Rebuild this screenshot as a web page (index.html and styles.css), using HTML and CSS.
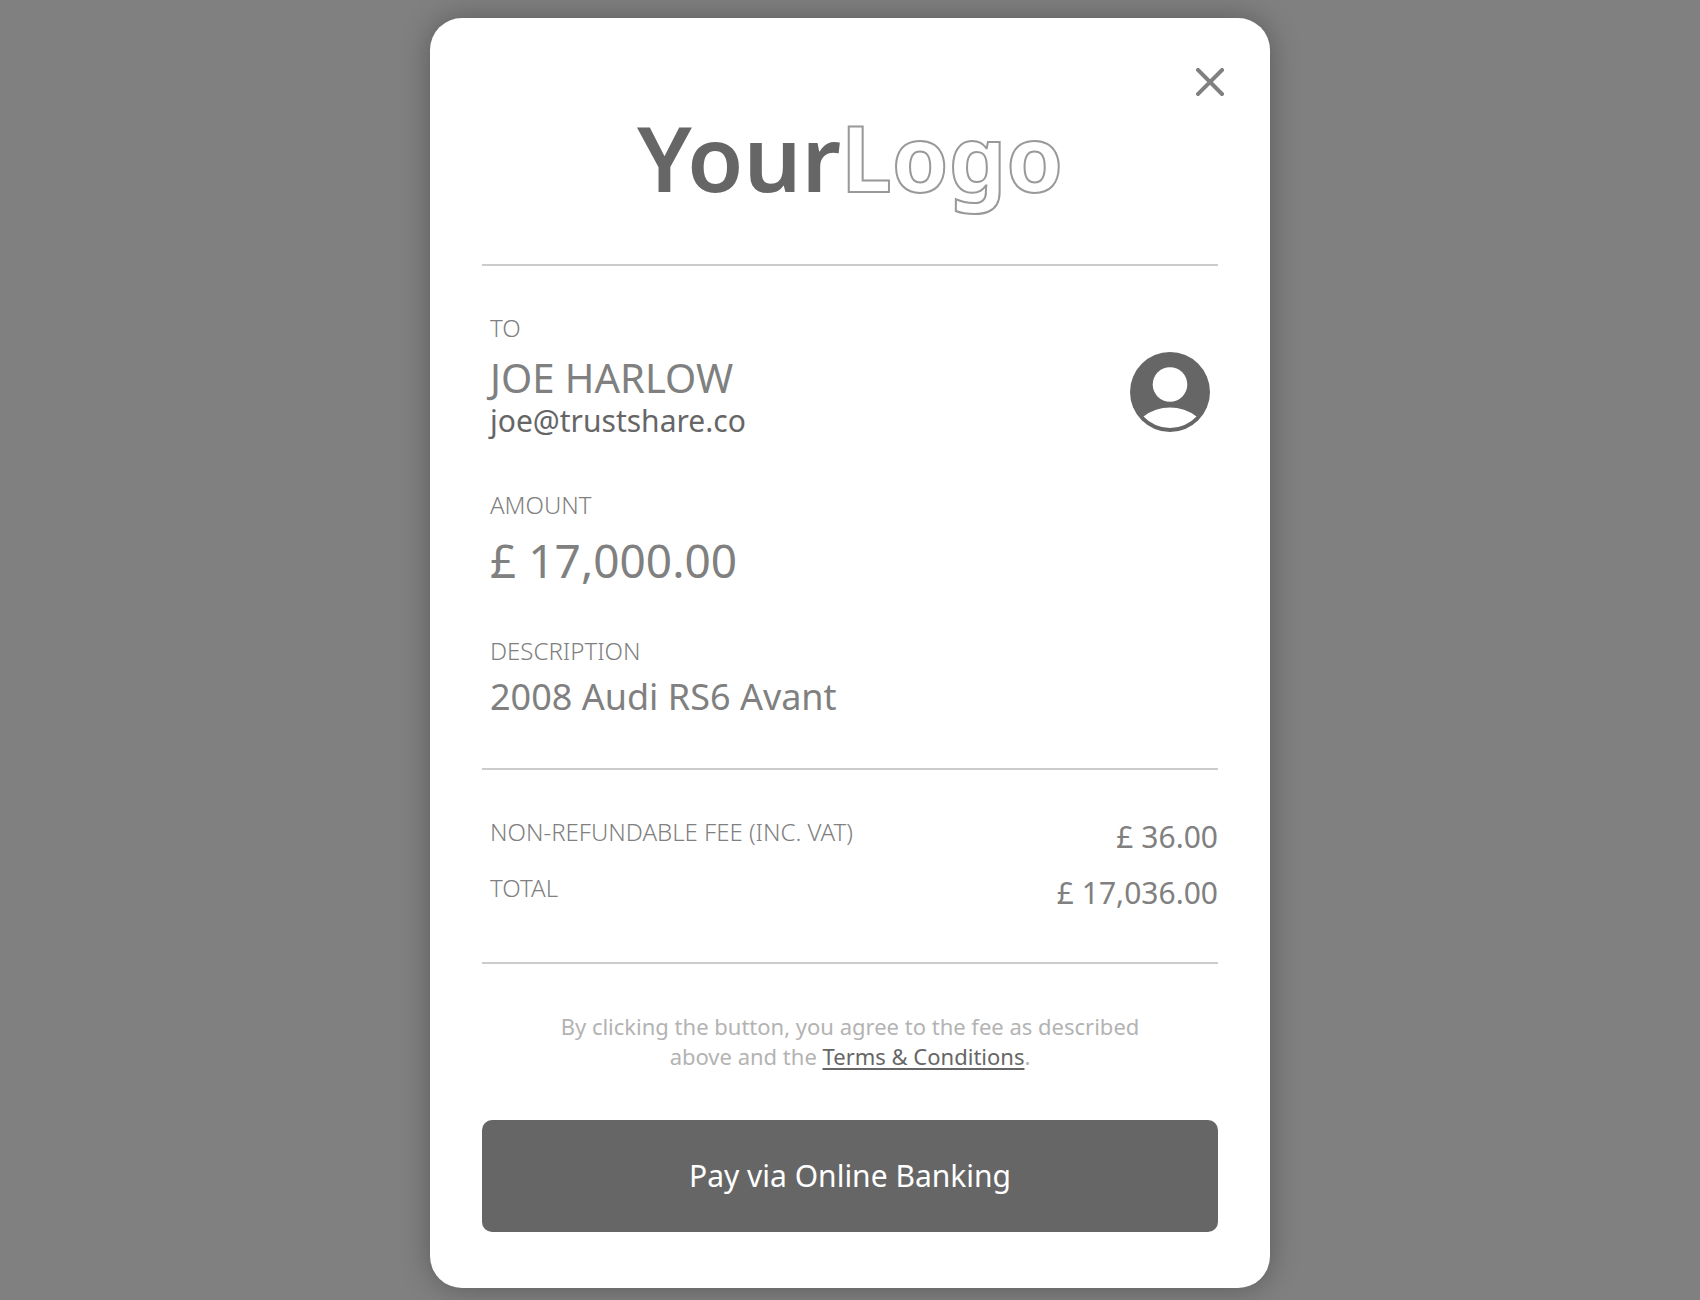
FILE: index.html
```
<!DOCTYPE html>
<html lang="en">
<head>
<meta charset="utf-8">
<meta name="viewport" content="width=device-width, initial-scale=1">
<title>Confirm payment</title>
<link rel="stylesheet" href="styles.css">
</head>
<body>
<main class="dialog" role="dialog" aria-label="Confirm payment">
  <button class="close" type="button" aria-label="Close">
    <svg viewBox="0 0 28 28" width="28" height="28" aria-hidden="true"><path d="M2 2 26 26M26 2 2 26"/></svg>
  </button>

  <header class="brand">
    <span class="brand-solid">Your</span><span class="brand-outline">Logo</span>
  </header>

  <section class="details">
    <div class="recipient">
      <div class="field">
        <h2 class="label">TO</h2>
        <p class="name">JOE HARLOW</p>
        <p class="email">joe@trustshare.co</p>
      </div>
      <svg class="avatar" viewBox="0 0 80 80" width="80" height="80" aria-hidden="true">
        <circle class="avatar-disc" cx="40" cy="40" r="40"/>
        <circle class="avatar-figure" cx="40" cy="32.500" r="17.300"/>
        <path class="avatar-figure" d="M13.500 64.400A43.500 43.500 0 0 1 66.500 64.400A36 36 0 0 1 13.500 64.400Z"/>
      </svg>
    </div>
    <div class="field">
      <h2 class="label">AMOUNT</h2>
      <p class="amount">£ 17,000.00</p>
    </div>
    <div class="field">
      <h2 class="label">DESCRIPTION</h2>
      <p class="description">2008 Audi RS6 Avant</p>
    </div>
  </section>

  <dl class="totals">
    <div class="total-row">
      <dt class="label">NON-REFUNDABLE FEE (INC. VAT)</dt>
      <dd class="total-value">£ 36.00</dd>
    </div>
    <div class="total-row">
      <dt class="label">TOTAL</dt>
      <dd class="total-value">£ 17,036.00</dd>
    </div>
  </dl>

  <p class="consent">By clicking the button, you agree to the fee as described above and the <a class="terms" href="#terms">Terms &amp; Conditions</a>.</p>

  <button class="pay" type="button">Pay via Online Banking</button>
</main>
</body>
</html>
```
FILE: styles.css
```
*,
*::before,
*::after {
  box-sizing: border-box;
}

body {
  margin: 0;
  padding: 18px 16px 12px;
  background: #808080;
  color: #808080;
  font-family: "Noto Sans", "Open Sans", sans-serif;
}

h2,
p,
dl,
dd {
  margin: 0;
}

.dialog {
  position: relative;
  max-width: 840px;
  margin: 0 auto;
  padding: 0 52px 56px;
  border-radius: 32px;
  background: #fff;
  box-shadow: 0 0 30px rgba(0, 0, 0, 0.3);
}

.close {
  position: absolute;
  top: 42px;
  right: 38px;
  display: grid;
  place-items: center;
  width: 44px;
  height: 44px;
  padding: 0;
  border: 0;
  background: none;
  cursor: pointer;
}

.close path {
  fill: none;
  stroke: #808080;
  stroke-width: 4;
  stroke-linecap: square;
}

.brand {
  padding: 89px 0 57px;
  border-bottom: 2px solid #ccc;
  font-size: 91px;
  line-height: 100px;
  text-align: center;
}

.brand-solid {
  color: #666;
  font-weight: 600;
}

.brand-outline {
  color: transparent;
  font-weight: 700;
  -webkit-text-stroke: 2px #999;
}

.details {
  display: grid;
  gap: 48px;
  padding: 46px 8px 53px;
  border-bottom: 2px solid #ccc;
}

.recipient {
  display: flex;
  justify-content: space-between;
  align-items: flex-end;
}

.label {
  font-size: 24px;
  font-weight: 300;
  line-height: 32px;
}

.field .label {
  margin-bottom: 12px;
}

.name {
  font-size: 40px;
  line-height: 44px;
}

.email {
  color: #666;
  font-size: 30px;
  line-height: 41px;
}

.avatar {
  margin-bottom: 9px;
}

.avatar-disc {
  fill: #666;
}

.avatar-figure {
  fill: #fff;
}

.amount {
  font-size: 46px;
  line-height: 54px;
}

.description {
  font-size: 36px;
  line-height: 36px;
}

.totals {
  display: grid;
  gap: 14px;
  padding: 46px 0 48px 8px;
  border-bottom: 2px solid #ccc;
}

.total-row {
  display: flex;
  justify-content: space-between;
  align-items: flex-start;
}

.total-value {
  font-size: 30px;
  line-height: 42px;
}

.consent {
  max-width: 640px;
  margin: 47px auto 49px;
  color: #b3b3b3;
  font-size: 22px;
  line-height: 30px;
  text-align: center;
}

.terms {
  color: #666;
  text-decoration-thickness: 2px;
  text-underline-offset: 3px;
}

.pay {
  width: 100%;
  padding: 34px 16px;
  border: 0;
  border-radius: 10px;
  background: #666;
  color: #fff;
  font-family: inherit;
  font-size: 30px;
  line-height: 44px;
  cursor: pointer;
}
```
